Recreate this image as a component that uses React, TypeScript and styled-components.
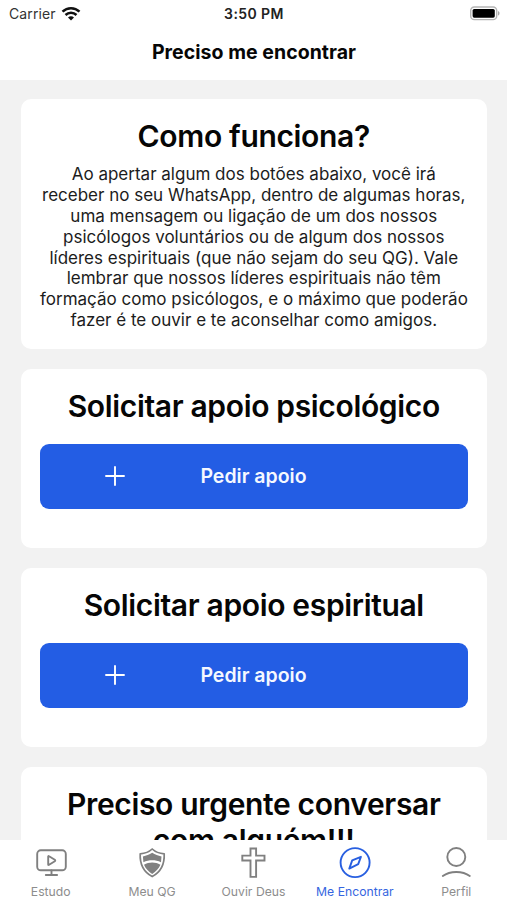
import React from "react";
import styled, { createGlobalStyle } from "styled-components";

const Global = createGlobalStyle`
  * { box-sizing: border-box; }
  html, body { margin: 0; padding: 0; background: #fff; }
  body { font-family: Inter, "Liberation Sans", sans-serif; color: #060606; overflow: hidden; }
`;

const Screen = styled.div`
  width: 507px;
  height: 900px;
  display: flex;
  flex-direction: column;
  overflow: hidden;
`;

const StatusBar = styled.header`
  height: 28px;
  flex: none;
  display: grid;
  grid-template-columns: 1fr auto 1fr;
  align-items: center;
  padding: 0 6px 0 9px;
  line-height: 18px;
`;

const Carrier = styled.div`
  display: flex;
  align-items: center;
  gap: 5px;
  font-size: 14px;
  color: #333;
  letter-spacing: 0.1px;
`;

const Clock = styled.div`
  margin-left: -2px;
  font-size: 14px;
  font-weight: 600;
  color: #222;
  letter-spacing: 0.42px;
`;

const BatterySlot = styled.div`
  display: flex;
  justify-content: flex-end;
`;

const TitleBar = styled.h1`
  height: 52px;
  flex: none;
  margin: 0;
  padding: 12px 0 0 1px;
  font-size: 19.5px;
  line-height: 24px;
  font-weight: 700;
  letter-spacing: 0.04px;
  text-align: center;
`;

const Content = styled.main`
  flex: 1;
  min-height: 0;
  overflow: hidden;
  background: #f2f2f2;
  padding: 19px 20px 0 20.5px;
  display: flex;
  flex-direction: column;
  gap: 19.5px;
`;

const Card = styled.section<{ $height: number }>`
  flex: none;
  height: ${(p) => p.$height}px;
  background: #fff;
  border-radius: 10px;
  padding: 19px 19.5px;
`;

const Heading = styled.h2`
  margin: 0;
  font-size: 30px;
  line-height: 36px;
  font-weight: 600;
  letter-spacing: -0.34px;
  text-align: center;
  white-space: nowrap;
`;

const Body = styled.p`
  margin: 10.4px 0 0;
  font-size: 17px;
  line-height: 20.8px;
  text-align: center;
  white-space: pre;
  color: #1c1c1c;
`;

const Button = styled.button`
  width: 100%;
  height: 65.5px;
  margin: 20px 0 0;
  padding: 0;
  border: 0;
  border-radius: 9px;
  background: #235de4;
  color: #f5f8ff;
  font: 600 19.5px/24px Inter, sans-serif;
  display: grid;
  grid-template-columns: 149px 129px 150px;
  align-items: center;
  justify-items: center;
  white-space: nowrap;
`;

const TabBar = styled.nav`
  height: 60px;
  flex: none;
  background: #fff;
  display: grid;
  grid-template-columns: repeat(5, 1fr);
`;

const Tab = styled.a<{ $active?: boolean }>`
  display: flex;
  flex-direction: column;
  align-items: center;
  padding-top: 5px;
  gap: 7px;
  font-size: 12.2px;
  line-height: 16px;
  white-space: nowrap;
  color: ${(p) => (p.$active ? "#3565e0" : "#8d8d8d")};
`;

const Icon = styled.svg`
  display: block;
  width: 36px;
  height: 36px;
  margin-bottom: -4px;
  fill: none;
  stroke: currentColor;
  color: ${(p) => p.color};
  stroke-width: 1.9;
  stroke-linecap: round;
  stroke-linejoin: round;
`;

const WifiIcon = () => (
  <svg width="20" height="15" viewBox="0 0 20 15" fill="none" stroke="#111" strokeWidth="2.5">
    <path d="M1.5 4.7C6.3.1 13.7.1 18.500 4.700" />
    <path d="M4.500 8c3.100-3 7.900-3 11 0" />
    <path d="M7 10.400c1.800-1.600 4.200-1.600 6 0L10 13.500Z" fill="#111" stroke="none" />
  </svg>
);

const BatteryIcon = () => (
  <svg width="32" height="16" viewBox="0 0 32 16">
    <rect x="1.700" y="1" width="26" height="12.600" rx="3.600" fill="#fff" stroke="#b5b5b5" strokeWidth="1.400" />
    <rect x="3.600" y="2.900" width="22.200" height="8.800" rx="1.600" fill="#000" />
    <path d="M29 5c2 .8 2 3.800 0 4.600Z" fill="#aaa" />
  </svg>
);

const PlusIcon = () => (
  <svg width="20" height="20" viewBox="0 0 20 20" stroke="#fff" strokeWidth="1.9" strokeLinecap="round">
    <path d="M10 1v18M1 10h18" />
  </svg>
);

const icons = {
  study: (
    <>
      <rect x="4.200" y="5.300" width="28.600" height="20" rx="3.600" />
      <path d="M15.200 11.600v7.800q0 1 .9.400l5.700-3.600q.9-.7 0-1.400l-5.700-3.600q-.9-.6-.9.400Z" />
      <path d="M18.500 25.500v4.300M12.800 30h11.300" />
    </>
  ),
  shield: (
    <>
      <path strokeWidth="1.700" d="M18.200 4c-3.200 3-7.400 4.500-12 4.800-.5 10.700 3 18 12 22.800 9-4.800 12.500-12.100 12-22.800-4.600-.3-8.800-1.800-12-4.800Z" />
      <path fill="currentColor" stroke="none" d="M18.200 7.800c-3 2-5.900 3-9.300 3.600l.5 5.800c5.600-2.600 12-2.600 17.600 0l.5-5.800c-3.400-.6-6.300-1.600-9.300-3.600Z" />
      <path fill="currentColor" stroke="none" d="M10 19.700c5-2.900 11.400-2.900 16.400 0-1.600 3.900-4.300 6.700-8.200 9.200-3.900-2.500-6.600-5.300-8.200-9.200Z" />
    </>
  ),
  cross: (
    <path strokeLinejoin="miter" d="M15.500 3.500h5.600v7.100h8.400v4.900h-8.400v16.400h-5.600V15.500H7.300v-4.900h8.200Z" />
  ),
  compass: (
    <>
      <circle cx="18.100" cy="17.600" r="14.500" />
      <path d="m23.900 11.800-2.700 7.400-8.900 4.400 2.900-8.200Z" />
    </>
  ),
  profile: (
    <>
      <circle cx="18.300" cy="12" r="9" />
      <path d="M4.800 31c7.200-5.400 19.800-5.400 27 0" />
    </>
  ),
};

const tabs: { label: string; icon: keyof typeof icons; active?: boolean }[] = [
  { label: "Estudo", icon: "study" },
  { label: "Meu QG", icon: "shield" },
  { label: "Ouvir Deus", icon: "cross" },
  { label: "Me Encontrar", icon: "compass", active: true },
  { label: "Perfil", icon: "profile" },
];

const explanation = [
  "Ao apertar algum dos botões abaixo, você irá",
  "receber no seu WhatsApp, dentro de algumas horas,",
  "uma mensagem ou ligação de um dos nossos",
  "psicólogos voluntários ou de algum dos nossos",
  "líderes espirituais (que não sejam do seu QG). Vale",
  "lembrar que nossos líderes espirituais não têm",
  "formação como psicólogos, e o máximo que poderão",
  "fazer é te ouvir e te aconselhar como amigos.",
].join("\n");

const SupportCard = ({ title }: { title: string }) => (
  <Card $height={179.5}>
    <Heading>{title}</Heading>
    <Button>
      <PlusIcon />
      <span>Pedir apoio</span>
    </Button>
  </Card>
);

export default function App() {
  return (
    <>
      <Global />
      <Screen>
        <StatusBar>
          <Carrier>
            Carrier <WifiIcon />
          </Carrier>
          <Clock>3:50 PM</Clock>
          <BatterySlot>
            <BatteryIcon />
          </BatterySlot>
        </StatusBar>
        <TitleBar>Preciso me encontrar</TitleBar>
        <Content>
          <Card $height={250}>
            <Heading>Como funciona?</Heading>
            <Body>{explanation}</Body>
          </Card>
          <SupportCard title="Solicitar apoio psicológico" />
          <SupportCard title="Solicitar apoio espiritual" />
          <Card $height={250}>
            <Heading>
              Preciso urgente conversar
              <br />
              com alguém!!!
            </Heading>
          </Card>
        </Content>
        <TabBar>
          {tabs.map((t) => (
            <Tab key={t.label} $active={t.active}>
              <Icon viewBox="0 0 36 36" color={t.active ? "#285fe0" : "#808080"}>
                {icons[t.icon]}
              </Icon>
              {t.label}
            </Tab>
          ))}
        </TabBar>
      </Screen>
    </>
  );
}
